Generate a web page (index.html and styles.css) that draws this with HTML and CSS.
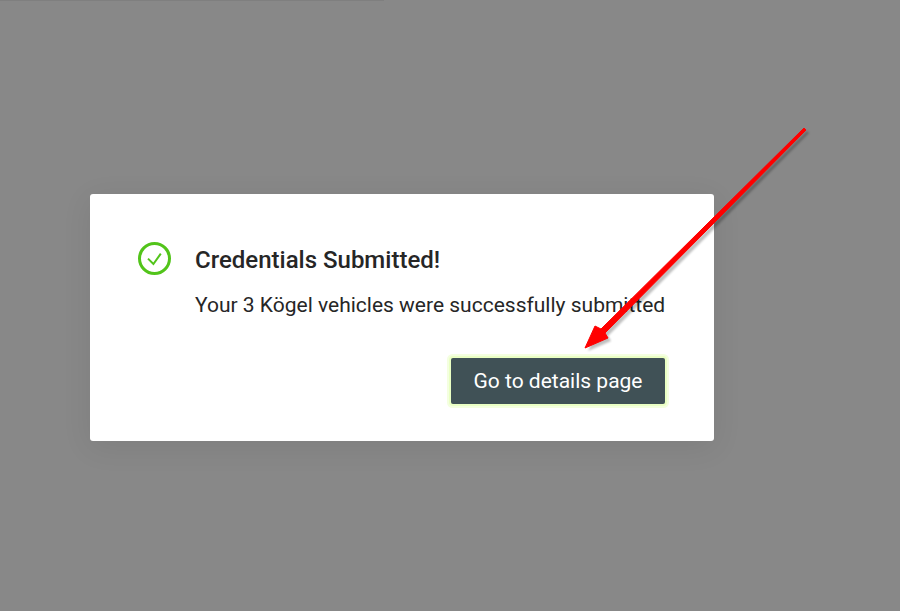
FILE: index.html
```html
<!DOCTYPE html>
<html lang="en">
<head>
<meta charset="utf-8">
<title>Credentials Submitted</title>
<link rel="stylesheet" href="styles.css">
</head>
<body>
<div class="progress"></div>
<main class="backdrop">
  <section class="card">
    <div class="message">
      <svg class="status-icon" viewBox="0 0 33 33" aria-hidden="true">
        <circle cx="16.5" cy="16.5" r="15" fill="none" stroke="#52c41a" stroke-width="3"/>
        <path d="M10 16.6l5.4 5.4 7.4-10.4" fill="none" stroke="#52c41a" stroke-width="2"/>
      </svg>
      <div class="copy">
        <h1 class="title">Credentials Submitted!</h1>
        <p class="text">Your 3 Kögel vehicles were successfully submitted</p>
      </div>
    </div>
    <div class="actions">
      <button class="primary" type="button">Go to details page</button>
    </div>
  </section>
</main>
<svg class="annotation" viewBox="0 0 900 611" aria-hidden="true">
  <path class="arrow-shadow" d="M804 128L806 130 605 333 608 338 585 348 595 326 601 329Z"/>
  <path class="arrow-fill" d="M804 128L806 130 605 333 608 338 585 348 595 326 601 329Z"/>
</svg>
</body>
</html>
```
FILE: styles.css
```css
* { box-sizing: border-box; }
html, body { margin: 0; height: 100%; }
body {
  background: #888888;
  font-family: Roboto, "Liberation Sans", sans-serif;
  overflow: hidden;
  position: relative;
}
.progress {
  position: absolute;
  top: 0;
  left: 0;
  width: 384px;
  height: 1px;
  background: #7f7f7f;
}
.backdrop { padding: 194px 0 0 90px; }
.card {
  width: 624px;
  height: 247px;
  background: #fff;
  border-radius: 3px;
  padding: 48px 48px 0;
  box-shadow: 0 6px 30px rgba(0, 0, 0, 0.08);
}
.message { display: flex; gap: 24px; }
.status-icon { width: 33px; height: 33px; flex: none; }
.copy { padding-top: 3px; }
.title {
  margin: 0;
  font-size: 24px;
  line-height: 30px;
  font-weight: 500;
  color: #262626;
}
.text {
  margin: 18px 0 0;
  font-size: 21px;
  line-height: 24px;
  font-weight: 400;
  color: #262626;
  white-space: nowrap;
}
.actions { display: flex; justify-content: flex-end; margin-top: 41px; }
.primary {
  width: 214px;
  height: 46px;
  margin-right: 1px;
  border: 0;
  border-radius: 2px;
  background: #405156;
  color: #fff;
  font: 400 21px/24px Roboto, "Liberation Sans", sans-serif;
  box-shadow: 0 0 0 2px #eaffc4, 0 0 0 4px #f4ffe0;
}
.annotation { position: absolute; inset: 0; width: 900px; height: 611px; }
.arrow-fill { fill: #ff0000; stroke: #ff0000; stroke-width: 1; stroke-linejoin: round; }
.arrow-shadow { fill: #000; opacity: 0.25; transform: translate(3px, 3px); filter: blur(1.2px); }
```
